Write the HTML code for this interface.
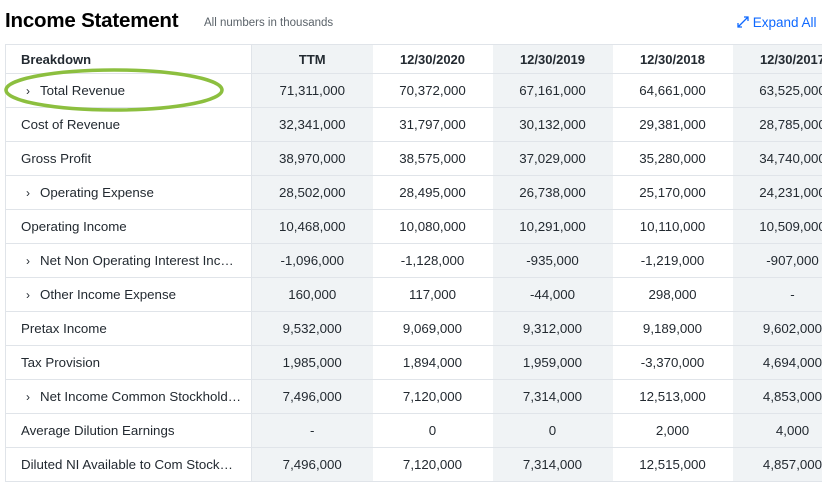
<html><head><style>
body{margin:0;width:835px;height:484px;overflow:hidden;background:#fff;font-family:"Liberation Sans",sans-serif;color:#232a31;position:relative}
.t{position:absolute;left:5px;top:9px;font-size:20.5px;font-weight:bold;color:#000;letter-spacing:-0.2px}
.s{position:absolute;left:204px;top:17px;font-size:11.5px;color:#5b636a}
.e{position:absolute;left:737px;top:15px;font-size:13.5px;color:#0f69ff}
.wrap{position:absolute;left:5px;top:44px;width:817px;height:440px;overflow:hidden}
table{border-collapse:collapse;table-layout:fixed;width:847px}
td{border-bottom:1px solid #e0e4e9;height:34px;font-size:13.3px;text-align:center;padding:0;white-space:nowrap;overflow:hidden}
tr:first-child td{height:29px;font-weight:bold;font-size:13px;border-top:1px solid #e0e4e9}
td:first-child{text-align:left;padding-left:15px;border-right:1px solid #e0e4e9;border-left:1px solid #e0e4e9}
td:nth-child(2),td:nth-child(4),td:nth-child(6){background:#f0f3f5}
.c{display:inline-block;width:14px;padding-left:5px;font-size:12px}
</style></head><body>
<div class="t">Income Statement</div>
<div class="s">All numbers in thousands</div>
<div class="e"><svg width="12" height="12" viewBox="0 0 12 12" style="vertical-align:-1px"><path d="M1 11L11 1M7 1h4v4M1 7v4h4" stroke="#0f69ff" stroke-width="1.3" fill="none"/></svg> Expand All</div>
<div class="wrap"><table>
<colgroup><col style="width:246px"><col style="width:121px"><col style="width:120px"><col style="width:120px"><col style="width:120px"><col style="width:120px"></colgroup>
<tr><td>Breakdown</td><td>TTM</td><td>12/30/2020</td><td>12/30/2019</td><td>12/30/2018</td><td>12/30/2017</td></tr>
<tr><td><span class="c">›</span>Total Revenue</td><td>71,311,000</td><td>70,372,000</td><td>67,161,000</td><td>64,661,000</td><td>63,525,000</td></tr>
<tr><td>Cost of Revenue</td><td>32,341,000</td><td>31,797,000</td><td>30,132,000</td><td>29,381,000</td><td>28,785,000</td></tr>
<tr><td>Gross Profit</td><td>38,970,000</td><td>38,575,000</td><td>37,029,000</td><td>35,280,000</td><td>34,740,000</td></tr>
<tr><td><span class="c">›</span>Operating Expense</td><td>28,502,000</td><td>28,495,000</td><td>26,738,000</td><td>25,170,000</td><td>24,231,000</td></tr>
<tr><td>Operating Income</td><td>10,468,000</td><td>10,080,000</td><td>10,291,000</td><td>10,110,000</td><td>10,509,000</td></tr>
<tr><td><span class="c">›</span>Net Non Operating Interest Inc…</td><td>-1,096,000</td><td>-1,128,000</td><td>-935,000</td><td>-1,219,000</td><td>-907,000</td></tr>
<tr><td><span class="c">›</span>Other Income Expense</td><td>160,000</td><td>117,000</td><td>-44,000</td><td>298,000</td><td>-</td></tr>
<tr><td>Pretax Income</td><td>9,532,000</td><td>9,069,000</td><td>9,312,000</td><td>9,189,000</td><td>9,602,000</td></tr>
<tr><td>Tax Provision</td><td>1,985,000</td><td>1,894,000</td><td>1,959,000</td><td>-3,370,000</td><td>4,694,000</td></tr>
<tr><td><span class="c">›</span>Net Income Common Stockhold…</td><td>7,496,000</td><td>7,120,000</td><td>7,314,000</td><td>12,513,000</td><td>4,853,000</td></tr>
<tr><td>Average Dilution Earnings</td><td>-</td><td>0</td><td>0</td><td>2,000</td><td>4,000</td></tr>
<tr><td>Diluted NI Available to Com Stock…</td><td>7,496,000</td><td>7,120,000</td><td>7,314,000</td><td>12,515,000</td><td>4,857,000</td></tr>
</table></div>
<svg style="position:absolute;left:0;top:64px" width="230" height="52"><ellipse cx="114" cy="26" rx="108" ry="20" fill="none" stroke="#8cbf3f" stroke-width="3.5"/></svg>
</body></html>
